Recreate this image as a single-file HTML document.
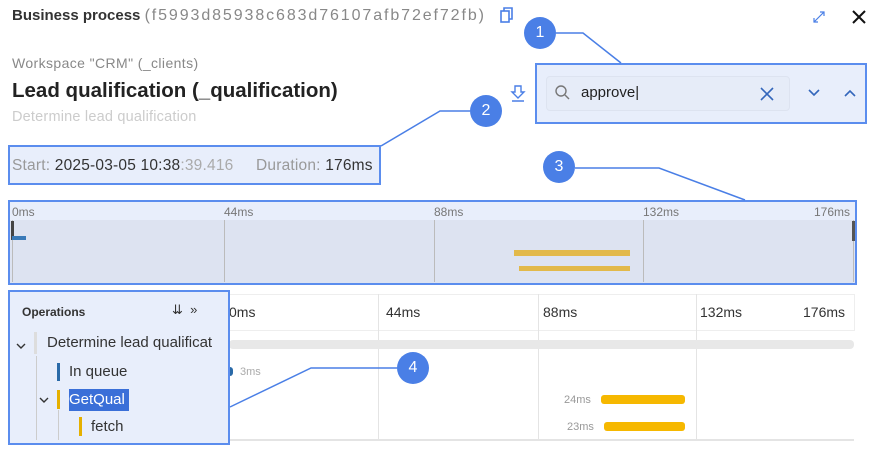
<!DOCTYPE html>
<html><head><meta charset="utf-8"><style>
*{margin:0;padding:0;box-sizing:border-box}
body{width:874px;height:451px;background:#fff;font-family:"Liberation Sans",sans-serif;position:relative;overflow:hidden;color:#222}
.a{position:absolute;white-space:nowrap}
.c{position:absolute;width:32px;height:32px;border-radius:50%;background:#4a7fe6;color:#fff;font-size:16px;text-align:center;line-height:32px}
.bx{position:absolute;border:2px solid #5b8dee;background:#e8eefb}
.vl{position:absolute;width:1px;background:#bbb}
</style></head><body>
<div class="a" style="left:12px;top:7px;font-size:15px;font-weight:bold;color:#333">Business process <span style="font-weight:normal;color:#888;font-size:16px;letter-spacing:1.9px">(f5993d85938c683d76107afb72ef72fb)</span></div>
<svg class="a" style="left:500px;top:7px" width="14" height="17" viewBox="0 0 14 17"><rect x="1" y="4" width="8" height="11" fill="none" stroke="#4a7fe6" stroke-width="1.6"/><path d="M4 4V1h8v11H9" fill="none" stroke="#4a7fe6" stroke-width="1.6"/></svg>
<svg class="a" style="left:812px;top:10px" width="14" height="14"><path d="M2 12L12 2M8 2h4v4M2 8v4h4" fill="none" stroke="#4a7fe6" stroke-width="1.2"/></svg>
<svg class="a" style="left:851px;top:9px" width="16" height="16"><path d="M2 2L14 14M14 2L2 14" stroke="#111" stroke-width="2"/></svg>
<div class="a" style="left:12px;top:55px;font-size:14px;color:#888;letter-spacing:0.4px">Workspace "CRM" (_clients)</div>
<div class="a" style="left:12px;top:79px;font-size:20.5px;font-weight:bold;color:#222">Lead qualification (_qualification)</div>
<div class="a" style="left:12px;top:109px;font-size:14.5px;color:#ccc;letter-spacing:0.2px">Determine lead qualification</div>
<div class="bx" style="left:8px;top:145px;width:373px;height:40px"></div>
<div class="a" style="left:12px;top:157px;font-size:15.5px;color:#999;letter-spacing:0.2px">Start: <span style="color:#333">2025-03-05 10:38</span><span style="color:#aaa">:39.416</span>&nbsp;&nbsp;&nbsp;&nbsp;&nbsp;Duration: <span style="color:#333">176ms</span></div>
<svg class="a" style="left:510px;top:85px" width="16" height="18"><path d="M5 1h6v6h3l-6 6-6-6h3z M2 16h12" fill="none" stroke="#4a7fe6" stroke-width="1.4"/></svg>
<div class="bx" style="left:535px;top:63px;width:332px;height:61px"></div>
<div class="a" style="left:546px;top:76px;width:244px;height:35px;border:1px solid #dde3f0;border-radius:4px;background:#e6ecf8"></div>
<svg class="a" style="left:554px;top:84px" width="16" height="16"><circle cx="7" cy="7" r="5" fill="none" stroke="#777" stroke-width="1.4"/><path d="M11 11l4 4" stroke="#777" stroke-width="1.4"/></svg>
<div class="a" style="left:581px;top:84px;font-size:15px;color:#222">approve|</div>
<svg class="a" style="left:760px;top:87px" width="14" height="14"><path d="M1 1L13 13M13 1L1 13" stroke="#3366bb" stroke-width="1.6"/></svg>
<svg class="a" style="left:808px;top:89px" width="12" height="8"><path d="M1 1l5 5 5-5" fill="none" stroke="#3366bb" stroke-width="1.6"/></svg>
<svg class="a" style="left:844px;top:89px" width="12" height="8"><path d="M1 7l5-5 5 5" fill="none" stroke="#3366bb" stroke-width="1.6"/></svg>
<!-- minimap -->
<div class="bx" style="left:8px;top:200px;width:849px;height:85px"></div>
<div class="a" style="left:10px;top:220px;width:845px;height:63px;background:#dde3f1"></div>
<div class="vl" style="left:12px;top:220px;height:62px"></div>
<div class="vl" style="left:224px;top:220px;height:62px"></div>
<div class="vl" style="left:434px;top:220px;height:62px"></div>
<div class="vl" style="left:643px;top:220px;height:62px"></div>
<div class="vl" style="left:853px;top:220px;height:62px"></div>
<div class="a" style="left:12px;top:205px;font-size:12px;color:#777">0ms</div>
<div class="a" style="left:224px;top:205px;font-size:12px;color:#777">44ms</div>
<div class="a" style="left:434px;top:205px;font-size:12px;color:#777">88ms</div>
<div class="a" style="left:643px;top:205px;font-size:12px;color:#777">132ms</div>
<div class="a" style="left:814px;top:205px;font-size:12px;color:#777">176ms</div>
<div class="a" style="left:11px;top:221px;width:3px;height:19px;background:#444"></div>
<div class="a" style="left:12px;top:236px;width:14px;height:4px;background:#3a7ab8"></div>
<div class="a" style="left:852px;top:221px;width:3px;height:20px;background:#555"></div>
<div class="a" style="left:514px;top:250px;width:116px;height:6px;background:#e2b94a"></div>
<div class="a" style="left:519px;top:266px;width:111px;height:5px;background:#e2b94a"></div>
<!-- timeline -->
<div class="a" style="left:229px;top:294px;width:626px;height:37px;border:1px solid #eee"></div>
<div class="vl" style="left:378px;top:294px;height:147px;background:#e4e4e4"></div>
<div class="vl" style="left:538px;top:294px;height:147px;background:#e4e4e4"></div>
<div class="vl" style="left:696px;top:294px;height:147px;background:#e4e4e4"></div>
<div class="a" style="left:229px;top:304px;font-size:14px;color:#333">0ms</div>
<div class="a" style="left:386px;top:304px;font-size:14px;color:#333">44ms</div>
<div class="a" style="left:543px;top:304px;font-size:14px;color:#333">88ms</div>
<div class="a" style="left:700px;top:304px;font-size:14px;color:#333">132ms</div>
<div class="a" style="left:803px;top:304px;font-size:14px;color:#333">176ms</div>
<div class="a" style="left:229px;top:340px;width:625px;height:9px;background:#e8e8e8;border-radius:4px"></div>
<div class="a" style="left:229px;top:439px;width:625px;height:2px;background:#e4e4e4"></div>
<div class="a" style="left:224px;top:367px;width:9px;height:9px;border-radius:3px;background:#2a6aa8"></div>
<div class="a" style="left:240px;top:366px;font-size:11px;color:#aaa">3ms</div>
<div class="a" style="left:564px;top:394px;font-size:11px;color:#999">24ms</div>
<div class="a" style="left:601px;top:395px;width:84px;height:9px;border-radius:3px;background:#f6b800"></div>
<div class="a" style="left:567px;top:421px;font-size:11px;color:#999">23ms</div>
<div class="a" style="left:604px;top:422px;width:81px;height:9px;border-radius:3px;background:#f6b800"></div>
<!-- ops -->
<div class="bx" style="left:8px;top:290px;width:222px;height:155px"></div>
<div class="a" style="left:22px;top:305px;font-size:12px;font-weight:bold;color:#333">Operations</div>
<div class="a" style="left:172px;top:302px;font-size:13px;color:#333">&#8650;&nbsp;&nbsp;&raquo;</div>
<div class="a" style="left:34px;top:332px;width:3px;height:22px;background:#ddd"></div>
<div class="a" style="left:36px;top:356px;width:1px;height:84px;background:#ccc"></div>
<div class="a" style="left:58px;top:410px;width:1px;height:30px;background:#ccc"></div>
<svg class="a" style="left:16px;top:343px" width="10" height="6"><path d="M1 1l4 4 4-4" fill="none" stroke="#333" stroke-width="1.4"/></svg>
<div class="a" style="left:47px;top:334px;font-size:15px;color:#333">Determine lead qualificat</div>
<div class="a" style="left:57px;top:363px;width:3px;height:18px;background:#2a6aa8"></div>
<div class="a" style="left:69px;top:363px;font-size:15px;color:#333">In queue</div>
<svg class="a" style="left:39px;top:397px" width="10" height="6"><path d="M1 1l4 4 4-4" fill="none" stroke="#333" stroke-width="1.4"/></svg>
<div class="a" style="left:57px;top:390px;width:3px;height:19px;background:#e5b000"></div>
<div class="a" style="left:69px;top:389px;width:60px;height:22px;background:#3a6fd8"></div>
<div class="a" style="left:69px;top:391px;font-size:15px;color:#fff">GetQual</div>
<div class="a" style="left:79px;top:417px;width:3px;height:19px;background:#e5b000"></div>
<div class="a" style="left:91px;top:418px;font-size:15px;color:#333">fetch</div>
<!-- callouts -->
<svg class="a" style="left:0;top:0" width="874" height="451"><g fill="none" stroke="#4a7fe6" stroke-width="1.5"><path d="M556 33H583L621 63"/><path d="M470 111H440L381 146"/><path d="M575 168H659L745 200"/><path d="M397 368H311L230 407"/></g></svg>
<div class="c" style="left:524px;top:17px">1</div>
<div class="c" style="left:470px;top:95px">2</div>
<div class="c" style="left:543px;top:151px">3</div>
<div class="c" style="left:397px;top:352px">4</div>
</body></html>
